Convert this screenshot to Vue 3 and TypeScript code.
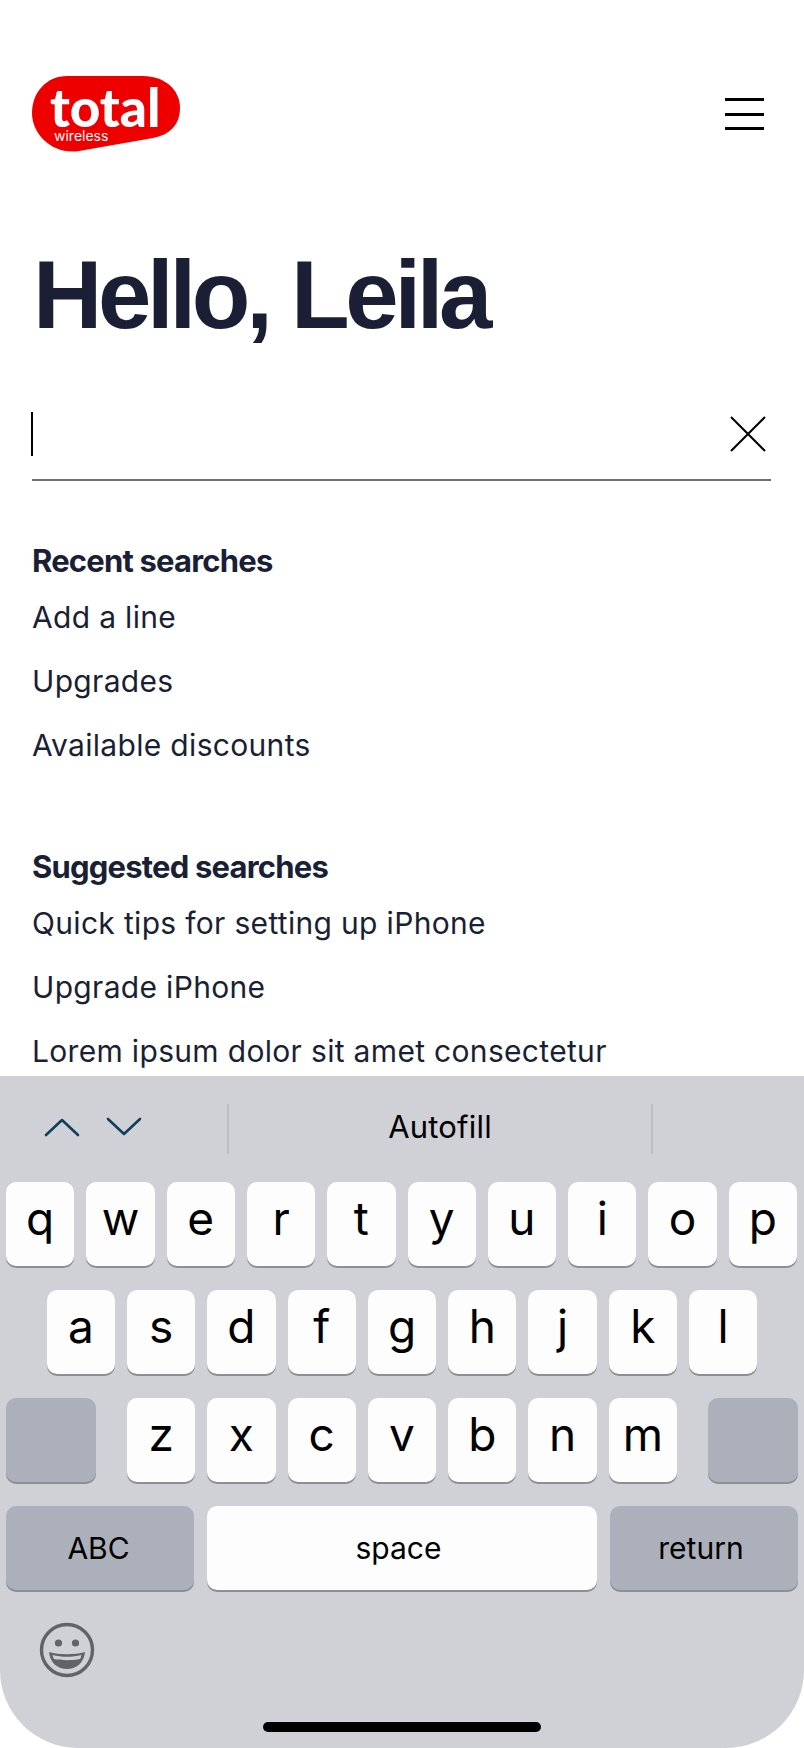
<script setup lang="ts">
const recent = ["Add a line", "Upgrades", "Available discounts"];
const suggested = [
  "Quick tips for setting up iPhone",
  "Upgrade iPhone",
  "Lorem ipsum dolor sit amet consectetur",
];
const rowOne = ["q", "w", "e", "r", "t", "y", "u", "i", "o", "p"];
const rowTwo = ["a", "s", "d", "f", "g", "h", "j", "k", "l"];
const rowThree = ["z", "x", "c", "v", "b", "n", "m"];
</script>

<template>
  <div class="page">
    <main class="content">
      <header class="top">
        <div class="logo">
          <svg class="logo-shape" width="150" height="78" viewBox="0 0 150 78">
            <path
              d="M36 1 H112 C134 1 149 15 149 33 C149 50 138 60 122 63 L48 76 C22 80 1 60 1 38 C1 17 16 1 36 1 Z"
              fill="#ee0000"
            />
          </svg>
          <span class="logo-total">total</span>
          <span class="logo-sub">wireless</span>
        </div>
        <button class="menu" aria-label="Menu"><i></i><i></i><i></i></button>
      </header>

      <h1>Hello, Leila</h1>

      <div class="search">
        <span class="caret"></span>
        <svg width="36" height="36" viewBox="0 0 36 36" class="clear">
          <path d="M1 1 L35 35 M35 1 L1 35" stroke="#000" stroke-width="2" fill="none" />
        </svg>
      </div>

      <section class="group">
        <h2>Recent searches</h2>
        <a v-for="item in recent" :key="item">{{ item }}</a>
      </section>

      <section class="group second">
        <h2>Suggested searches</h2>
        <a v-for="item in suggested" :key="item">{{ item }}</a>
      </section>
    </main>

    <div class="keyboard">
      <div class="toolbar">
        <div class="arrows">
          <svg width="36" height="20" viewBox="0 0 36 20">
            <path d="M2 18 L18 3 L34 18" stroke="#0f3f5c" stroke-width="2.6" stroke-linecap="round" stroke-linejoin="round" fill="none" />
          </svg>
          <svg width="36" height="20" viewBox="0 0 36 20">
            <path d="M2 2 L18 17 L34 2" stroke="#0f3f5c" stroke-width="2.6" stroke-linecap="round" stroke-linejoin="round" fill="none" />
          </svg>
        </div>
        <div class="autofill">Autofill</div>
        <div class="toolbar-end"></div>
      </div>

      <div class="keys">
        <div class="row row-one">
          <span v-for="k in rowOne" :key="k" class="key">{{ k }}</span>
        </div>
        <div class="row">
          <span v-for="k in rowTwo" :key="k" class="key">{{ k }}</span>
        </div>
        <div class="row row-three">
          <span class="key dark shift"></span>
          <div class="letters">
            <span v-for="k in rowThree" :key="k" class="key">{{ k }}</span>
          </div>
          <span class="key dark shift"></span>
        </div>
        <div class="row row-four">
          <span class="key dark wide abc">ABC</span>
          <span class="key space">space</span>
          <span class="key dark wide return">return</span>
        </div>
      </div>

      <div class="bottom">
        <svg class="emoji" width="56" height="56" viewBox="0 0 56 56">
          <circle cx="28" cy="28" r="25.5" fill="none" stroke="#636366" stroke-width="3.4" />
          <circle cx="19.5" cy="21" r="3.6" fill="#636366" />
          <circle cx="36.5" cy="21" r="3.6" fill="#636366" />
          <path d="M10 30 C20 33 36 33 46 30 C45 41 37 47 28 47 C19 47 11 41 10 30 Z" fill="#636366" />
          <path d="M13.5 33 C22 35.4 34 35.4 42.5 33 C42 35 41.6 36 41 37 C33 38.6 23 38.6 15 37 C14.4 36 14 35 13.5 33 Z" fill="#d0d1d6" />
        </svg>
      </div>
      <div class="home-bar"></div>
    </div>
  </div>
</template>

<style scoped>
.page {
  width: 804px;
  height: 1748px;
  display: flex;
  flex-direction: column;
  overflow: hidden;
  background: #fff;
  font-family: "Liberation Sans", Arial, sans-serif;
  color: #1a1f36;
}

.content {
  flex: 1;
  min-height: 0;
  overflow: hidden;
  padding: 75px 33px 0 32px;
}

.top {
  display: flex;
  justify-content: space-between;
  align-items: flex-start;
  height: 78px;
  margin-left: -1px;
}

.logo {
  position: relative;
  width: 150px;
  height: 78px;
}

.logo-shape {
  display: block;
}

.logo-total {
  position: absolute;
  left: 19px;
  top: 10px;
  font-family: Lato, sans-serif;
  font-weight: 900;
  font-size: 53px;
  line-height: 44px;
  color: #fff;
}

.logo-sub {
  position: absolute;
  left: 23px;
  top: 54px;
  font-family: Inter, sans-serif;
  font-size: 14px;
  line-height: 14px;
  color: #fff;
}

.menu {
  width: 39px;
  height: 32px;
  margin: 23px 7px 0 0;
  padding: 0;
  border: 0;
  background: none;
  display: flex;
  flex-direction: column;
  justify-content: space-between;
}

.menu i {
  display: block;
  height: 3px;
  background: #000;
}

h1 {
  margin: 87px 0 0 1px;
  font-size: 96px;
  line-height: 110px;
  font-weight: 700;
  letter-spacing: -4.3px;
}

.search {
  display: flex;
  justify-content: space-between;
  align-items: center;
  height: 82px;
  padding-bottom: 4px;
  margin-top: 43px;
  padding-right: 5px;
  border-bottom: 2px solid #707070;
}

.caret {
  display: block;
  width: 2px;
  height: 44px;
  margin-left: -1px;
  background: #000;
}

.clear {
  display: block;
}

.group {
  display: flex;
  flex-direction: column;
  margin-top: 58px;
}

.group.second {
  margin-top: 68px;
}

h2 {
  margin: 0 0 2px;
  font-family: Inter, sans-serif;
  font-size: 31px;
  line-height: 44px;
  font-weight: 700;
  letter-spacing: -0.8px;
}

.group a {
  font-family: Inter, sans-serif;
  font-size: 30px;
  line-height: 64px;
  letter-spacing: 0.32px;
  white-space: nowrap;
}

.keyboard {
  position: relative;
  flex: none;
  height: 672px;
  background: #d0d1d6;
  border-radius: 0 0 78px 78px;
  color: #000;
  font-family: Inter, sans-serif;
}

.toolbar {
  display: flex;
  align-items: center;
  height: 106px;
}

.arrows {
  display: flex;
  gap: 26px;
  width: 229px;
  padding: 0 0 4px 44px;
  box-sizing: border-box;
  height: 50px;
  align-items: center;
  border-right: 2px solid #bcbdc4;
}

.autofill {
  width: 422px;
  text-align: center;
  font-size: 31px;
  line-height: 46px;
  letter-spacing: 0.2px;
  height: 50px;
  border-right: 2px solid #bcbdc4;
}

.keys {
  display: flex;
  flex-direction: column;
  gap: 24px;
}

.row {
  display: flex;
  justify-content: center;
  gap: 12px;
}

.row-one {
  margin-left: -1px;
}

.letters {
  display: flex;
  gap: 12px;
}

.row-three {
  justify-content: space-between;
  padding: 0 6px;
}

.row-four {
  padding: 0 6px;
  gap: 13px;
}

.key {
  display: flex;
  align-items: center;
  justify-content: center;
  box-sizing: border-box;
  width: 68.3px;
  height: 84px;
  padding-bottom: 12px;
  background: #fdfdfe;
  border-radius: 10px;
  box-shadow: 0 2px 0 #8e8f94;
  font-size: 46px;
}

.key.dark {
  background: #abb0ba;
}

.key.shift {
  width: 90px;
}

.key.wide,
.key.space {
  padding-bottom: 0;
  font-size: 30px;
}

.key.wide {
  width: 188px;
}

.key.abc {
  padding-right: 3px;
}

.key.return {
  padding-right: 6px;
}

.key.space {
  flex: 1;
  padding-right: 7px;
}

.bottom {
  padding: 32px 0 0 39px;
}

.emoji {
  display: block;
}

.home-bar {
  position: absolute;
  left: 263px;
  bottom: 16px;
  width: 278px;
  height: 10px;
  border-radius: 5px;
  background: #000;
}
</style>
